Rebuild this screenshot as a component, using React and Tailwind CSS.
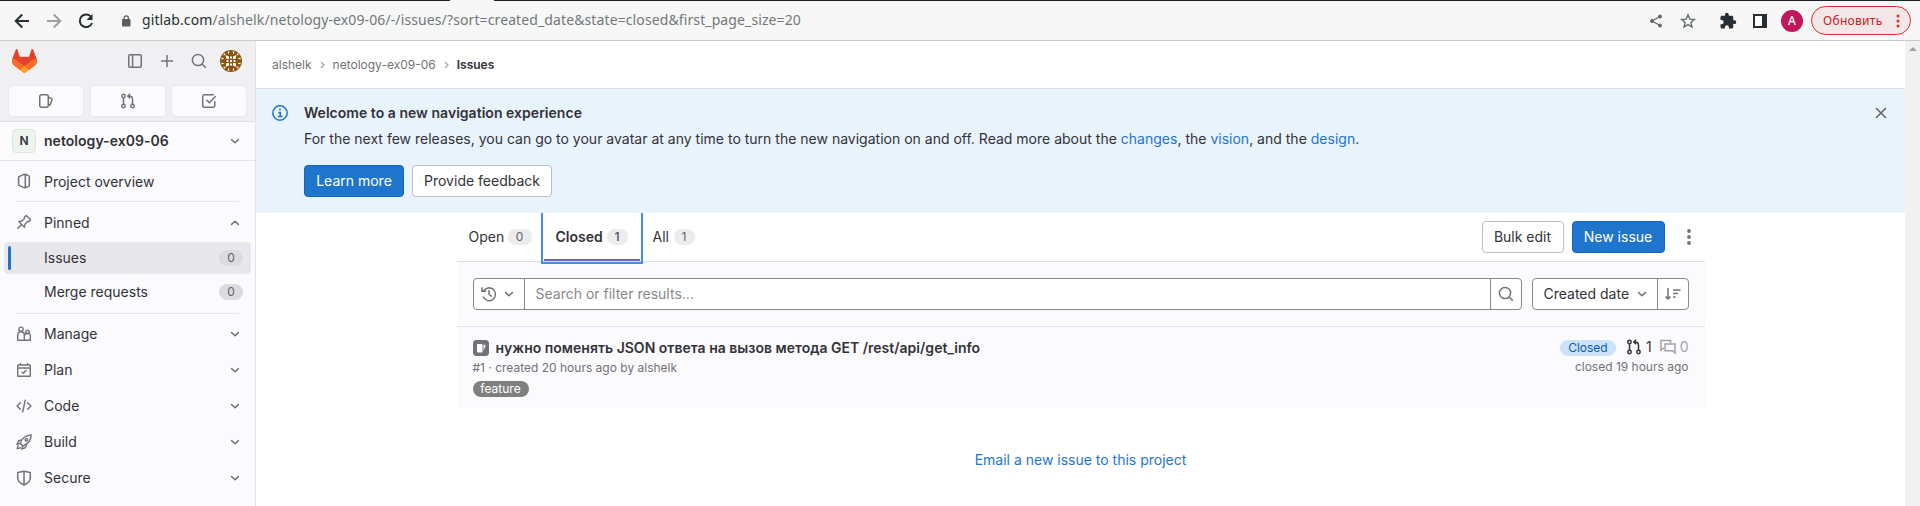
import React from "react";

const S = ({ s = 16, children, className = "", w = 1.5 }) => (
  <svg width={s} height={s} viewBox="0 0 16 16" fill="none" stroke="currentColor" strokeWidth={w} className={"shrink-0 " + className}>
    {children}
  </svg>
);

const ChevronDown = ({ className }) => <S className={className}><path d="M4.6 6.6 8 9.8l3.4-3.2" strokeLinecap="round" strokeLinejoin="round" /></S>;
const ChevronUp = ({ className }) => <S className={className}><path d="M4.6 9.4 8 6.2l3.4 3.2" strokeLinecap="round" strokeLinejoin="round" /></S>;
const SearchIcon = () => <S><circle cx="7" cy="7" r="5.6" /><path d="m11 11 3.8 3.8" /></S>;
const MergeIcon = () => (
  <S>
    <circle cx="3.5" cy="3" r="1.7" /><circle cx="3.5" cy="13" r="1.7" /><circle cx="12.5" cy="13" r="1.7" />
    <path d="M3.5 4.7v6.6M12.5 11.3V6a3 3 0 0 0-3-3H8M10 .8 7.8 3 10 5.2" />
  </S>
);
const IssuesIcon = () => (
  <S><rect x="1.75" y="1.75" width="8.5" height="12.5" rx="1.5" /><path d="M10.3 4.3 13.6 5.6a.8.8 0 0 1 .5 1l-2.3 5.6-1.5-.7" strokeLinejoin="round" /></S>
);
const TodoIcon = () => <S><path d="M13.8 8.8v3.4a2 2 0 0 1-2 2H3.7a2 2 0 0 1-2-2V3.7a2 2 0 0 1 2-2h8.6M5.8 7.2l2.6 2.6 6-6.2" strokeLinecap="round" strokeLinejoin="round" /></S>;
const PanelIcon = () => <S><rect x="1.75" y="1.75" width="12.5" height="12.5" rx="1.2" /><path d="M5.6 2v12" /></S>;
const PlusIcon = () => <S><path d="M8 2v12M2 8h12" /></S>;
const OverviewIcon = () => <S className="mb-0.5"><path d="M6.9 1.9 3 3.6a.8.8 0 0 0-.4.7v7.4c0 .3.1.6.4.7l3.9 1.7M9.3 1.3v13.4M6.9 1.8l2.4-.6 3.2 1.4c.5.2.8.6.8 1v8.8c0 .4-.3.8-.8 1l-3.2 1.4-2.4-.6" strokeLinejoin="round" /></S>;
const PinIcon = () => <S w={1.4} className="mb-0.5"><path d="m1.3 14.7 4.2-4.2M2.8 7.6l5.6 5.6.6-3 2.500-2.800 1.100.4 2-2-4.400-4.400-2 2 .4 1.100-2.800 2.500z" strokeLinejoin="round" /></S>;
const ManageIcon = () => (
  <S w={1.4}><circle cx="5" cy="3.2" r="2.1" /><path d="M1.7 14.3V9a3.3 3.3 0 0 1 6.6 0v5.3zM8.3 14.3h6V10.5a2.8 2.8 0 0 0-5.6-1" strokeLinejoin="round" /><circle cx="11.5" cy="5.9" r="1.8" /></S>
);
const PlanIcon = () => <S w={1.4}><rect x="1.7" y="3" width="12.6" height="11.3" rx=".5" /><path d="M1.7 6h12.6M4.5 1v2M11.5 1v2M5.8 9.8l1.6 1.5 3-3" /></S>;
const CodeIcon = () => <S><path d="M4.3 4.8 1.1 8l3.2 3.2M11.7 4.8 14.9 8l-3.2 3.2M9.2 2.3 6.8 13.7" strokeLinecap="round" strokeLinejoin="round" /></S>;
const BuildIcon = () => (
  <S w={1.4}><path d="M4.2 9.2C5.8 4.6 9.6 1.2 15.2.9c-.2 5.4-3.6 9.4-8.1 11z" strokeLinejoin="round" /><circle cx="10.3" cy="5.8" r="1.2" /><path d="M5.5 5.8 2.8 6.6.9 10.3l3.4-.9M10.3 10.6l-.8 2.9-3.8 1.6 1-3.6M2.2 11.2l-1 3.4 3.6-.8" strokeLinejoin="round" /></S>
);
const SecureIcon = () => <S><path d="M8 1.2 1.7 2.6v5.2c0 3.3 2.3 5.6 6.3 7.2 4-1.6 6.3-3.9 6.3-7.2V2.6zM8 1.3V15" strokeLinejoin="round" /></S>;

const Logo = () => (
  <svg width="25" height="24" viewBox="0 0 25 24" className="shrink-0">
    <path fill="#E24329" d="m24.5 9.5-.03-.09L21.08.56a.9.9 0 0 0-1.69.09l-2.29 7.01H7.83L5.54.65A.9.9 0 0 0 3.85.56L.46 9.41l-.03.09a6.3 6.3 0 0 0 2.09 7.28l.01.01.03.02 5.16 3.87 2.56 1.93 1.55 1.18a1.05 1.05 0 0 0 1.27 0l1.55-1.18 2.56-1.93 5.2-3.89.01-.01A6.3 6.3 0 0 0 24.5 9.5z" />
    <path fill="#FC6D26" d="m24.5 9.5-.03-.09a11.4 11.4 0 0 0-4.56 2.05l-7.45 5.63 4.74 3.58 5.2-3.89.02-.01A6.3 6.3 0 0 0 24.5 9.5z" />
    <path fill="#FCA326" d="m7.7 20.68 2.58 1.94 1.55 1.18a1.05 1.05 0 0 0 1.27 0l1.55-1.18 2.56-1.94-4.75-3.59z" />
    <path fill="#FC6D26" d="M5.01 11.46A11.4 11.4 0 0 0 .46 9.41l-.03.09a6.3 6.3 0 0 0 2.09 7.28l.04.03 5.16 3.87 4.75-3.59z" />
  </svg>
);

const Avatar = () => (
  <svg width="22" height="22" viewBox="0 0 22 22" className="ml-[13px] shrink-0">
    <circle cx="11" cy="11" r="11" fill="#8a5310" />
    <g fill="#fff">
      <path d="M10 6.500h2v2h-2zM10 10h2v2h-2zM10 13.500h2v2h-2zM6.500 10h2v2h-2zM13.500 10h2v2h-2z" />
      <path d="M5.500 5l3.500 1.500v2.500H6.500zM16.500 5 13 6.500v2.500h2.500zM5.500 17 9 15.500V13H6.500zM16.500 17 13 15.500V13h2.500z" />
      <path d="M7.500 1.500h2l-1 3zM14.500 1.500h-2l1 3zM7.500 20.500h2l-1-3zM14.500 20.500h-2l1-3zM1.500 7.500v2l3-1zM1.500 14.500v-2l3 1zM20.500 7.500v2l-3-1zM20.500 14.500v-2l-3 1z" />
      <path d="M2.800 5.200 5 3l.3 2zM19.200 5.200 17 3l-.3 2zM2.800 16.800 5 19l.3-2zM19.200 16.800 17 19l-.3-2z" />
    </g>
  </svg>
);

const Toolbar = () => (
  <header className="flex h-[41px] shrink-0 flex-col border-b border-[#cbcbcc] bg-[#f7f7f7] font-['Noto_Sans',sans-serif]">
    <div className="flex h-px shrink-0 justify-between">
      <div className="w-[450px] bg-[#1d2226]" />
      <div className="w-[1426px] bg-[#1d2226]" />
    </div>
    <div className="flex h-[39px] items-center text-[#263033]">
      <svg width="16" height="16" viewBox="0 0 16 16" className="ml-[14px]" fill="none" stroke="#263033" strokeWidth="2"><path d="M15 8H2M8.200 1.500 1.700 8l6.500 6.500" /></svg>
      <svg width="16" height="16" viewBox="0 0 16 16" className="ml-4" fill="none" stroke="#9c9fa0" strokeWidth="2"><path d="M1 8h13M7.800 1.500 14.300 8l-6.500 6.500" /></svg>
      <svg width="16" height="16" viewBox="0 0 16 16" className="ml-4" fill="none" stroke="#263033" strokeWidth="2"><path d="M13.200 4A6.300 6.300 0 1 0 14 10" /><path d="M14.500 1v6h-6z" fill="#263033" stroke="none" /></svg>
      <svg width="10" height="12" viewBox="0 0 10 12" className="ml-[27px]"><rect x="1" y="4" width="8.500" height="7.500" rx="1" fill="#5a5f63" /><path d="M3 5V3a2.200 2.200 0 0 1 4.400 0v2" fill="none" stroke="#5a5f63" strokeWidth="1.300" /></svg>
      <span className="ml-[11px] pb-[2px] text-[14px] tracking-[0.11px] whitespace-nowrap text-[#72777a]"><span className="text-[#263033]">gitlab.com</span>/alshelk/netology-ex09-06/-/issues/?sort=created_date&amp;state=closed&amp;first_page_size=20</span>
      <div className="ml-auto flex items-center">
        <svg width="14" height="14" viewBox="0 0 14 14" className="mr-[17px]" fill="#5f6568" stroke="#5f6568"><circle cx="11" cy="2.500" r="1.500" /><circle cx="3" cy="7" r="1.500" /><circle cx="11" cy="11.500" r="1.500" /><path d="M11 2.500 3 7l8 4.500" fill="none" strokeWidth="1.200" /></svg>
        <svg width="16" height="16" viewBox="0 0 16 16" className="mr-[23px]" fill="none" stroke="#5f6568" strokeWidth="1.300"><path d="m8 1.800 1.800 4.300 4.600.4-3.500 3 1.100 4.500L8 11.600 4 14l1.100-4.500-3.500-3 4.600-.4z" /></svg>
        <svg width="18" height="18" viewBox="0 0 24 24" className="mr-[16px]" fill="#263033"><path d="M20.500 11H19V7c0-1.100-.9-2-2-2h-4V3.500a2.500 2.500 0 0 0-5 0V5H4c-1.100 0-2 .9-2 2v3.800h1.500a2.700 2.700 0 0 1 0 5.400H2V20c0 1.100.9 2 2 2h3.800v-1.500a2.700 2.700 0 0 1 5.400 0V22H17c1.100 0 2-.9 2-2v-4h1.500a2.500 2.500 0 0 0 0-5z" /></svg>
        <svg width="14" height="14" viewBox="0 0 14 14" className="mr-[14px]"><rect x="1" y="1" width="12" height="12" fill="#fff" stroke="#263033" strokeWidth="2" /><rect x="9" width="5" height="14" fill="#263033" /></svg>
        <span className="mr-2 flex size-[22px] items-center justify-center rounded-full bg-[#c2185b] text-[12px] font-medium text-white">A</span>
        <span className="mr-[9px] flex h-[29px] w-[100px] items-center rounded-full border border-[#cf2f27] bg-[#f3e6e6] pl-[11px] text-[12px] text-[#c5221f]">
          <span className="tracking-[0.3px]">Обновить</span>
          <svg width="4" height="14" viewBox="0 0 4 14" className="mr-[10px] ml-auto" fill="#d93025"><circle cx="2" cy="2" r="1.500" /><circle cx="2" cy="7" r="1.500" /><circle cx="2" cy="12" r="1.500" /></svg>
        </span>
      </div>
    </div>
  </header>
);

const NavBtn = ({ children }) => <div className="flex h-8 w-[76px] items-center justify-center rounded-sm border border-[#e7e7ec] bg-[#fbfafd] text-[#737278]">{children}</div>;

const NavItem = ({ icon, label, chevron }) => (
  <div className="flex h-9 items-center pr-[12px] pl-4">
    <span className="text-[#737278]">{icon}</span>
    <span className="ml-3 pb-px">{label}</span>
    <span className="ml-auto text-[#737278]">{chevron === "up" ? <ChevronUp /> : chevron === "down" ? <ChevronDown /> : null}</span>
  </div>
);

const Count = ({ children, className }) => <span className={"flex h-4 items-center justify-center rounded-full text-[12px] leading-4 " + className}>{children}</span>;

const Sidebar = () => (
  <aside className="flex w-64 shrink-0 flex-col border-r border-[#e4e4e8] bg-[#fbfafd] text-[#333238]">
    <div className="h-[81px] shrink-0 border-b border-[#e4e4e8] bg-[#f0f0f3]">
      <div className="flex h-10 items-center pl-3 text-[#737278]">
        <Logo />
        <span className="ml-[90px]"><PanelIcon /></span>
        <span className="ml-4"><PlusIcon /></span>
        <span className="ml-4"><SearchIcon /></span>
        <Avatar />
      </div>
      <div className="mt-1 flex justify-between pr-2 pl-2">
        <NavBtn><IssuesIcon /></NavBtn>
        <NavBtn><MergeIcon /></NavBtn>
        <NavBtn><TodoIcon /></NavBtn>
      </div>
    </div>
    <div className="flex h-[39px] shrink-0 items-center border-b border-[#e4e4e8] pr-3 pl-3">
      <span className="flex size-6 items-center justify-center rounded-sm border border-[#dfe6e1] bg-[#ecf4ee] text-[12px] font-semibold">N</span>
      <span className="ml-2 font-semibold tracking-[0.04px]">netology-ex09-06</span>
      <ChevronDown className="ml-auto text-[#737278]" />
    </div>
    <div className="pt-[3px]"><NavItem icon={<OverviewIcon />} label="Project overview" /></div>
    <div className="mx-4 mt-px h-px bg-[#e7e7eb]" />
    <div className="pt-[3px]"><NavItem icon={<PinIcon />} label="Pinned" chevron="up" /></div>
    <div className="mx-1 mt-px flex h-8 items-center rounded-sm bg-[#e8e7ec] pr-2 pl-1">
      <span className="h-6 w-[3px] rounded-full bg-[#1f75cb]" />
      <span className="ml-[33px]">Issues</span>
      <Count className="ml-auto w-6 bg-[#dcdcde] text-[#626168]">0</Count>
    </div>
    <div className="mx-1 mt-[2px] flex h-8 items-center pr-2 pl-10">
      <span>Merge requests</span>
      <Count className="ml-auto w-6 bg-[#dcdcde] text-[#626168]">0</Count>
    </div>
    <div className="mx-4 mt-[5px] mb-[2px] h-px bg-[#e7e7eb]" />
    <NavItem icon={<ManageIcon />} label="Manage" chevron="down" />
    <NavItem icon={<PlanIcon />} label="Plan" chevron="down" />
    <NavItem icon={<CodeIcon />} label="Code" chevron="down" />
    <NavItem icon={<BuildIcon />} label="Build" chevron="down" />
    <NavItem icon={<SecureIcon />} label="Secure" chevron="down" />
  </aside>
);

const Crumb = () => <svg width="5" height="8" viewBox="0 0 5 8" fill="none" stroke="#a4a3a8" strokeWidth="1.200"><path d="m1 1 3 3-3 3" /></svg>;

const Banner = () => (
  <section className="flex h-[124px] bg-[#e9f3fc] pr-4 pl-4">
    <svg width="16" height="16" viewBox="0 0 16 16" className="mt-4" fill="none" stroke="#1f75cb" strokeWidth="1.500"><circle cx="8" cy="8" r="7.200" /><path d="M6.300 7.500h2v4M5.800 11.500h4.600" /><circle cx="8" cy="4.600" r="1" fill="#1f75cb" stroke="none" /></svg>
    <div className="ml-4">
      <h2 className="mt-[13px] text-[14px] leading-[21px] font-semibold tracking-[0.03px]">Welcome to a new navigation experience</h2>
      <p className="mt-[5px] leading-[21px] tracking-[0.005px] whitespace-nowrap">
        For the next few releases, you can go to your avatar at any time to turn the new navigation on and off. Read more about the <a className="text-[#1f75cb]">changes</a>, the <a className="text-[#1f75cb]">vision</a>, and the <a className="text-[#1f75cb]">design</a>.
      </p>
      <div className="mt-4 flex gap-2">
        <button className="h-8 w-[100px] rounded-sm border border-[#1068bf] bg-[#1f75cb] pb-px text-white">Learn more</button>
        <button className="h-8 w-[140px] rounded-sm border border-[#bfbfc3] bg-white pb-px">Provide feedback</button>
      </div>
    </div>
    <S className="mt-4 ml-auto text-[#626168]"><path d="m3 3 10 10M13 3 3 13" /></S>
  </section>
);

const Tabs = () => (
  <div className="relative z-10 flex h-[49px] border-b border-[#dcdcde]">
    <div className="flex w-[84px] items-center pl-3"><span className="pb-px">Open</span><Count className="mr-[9px] ml-auto w-6 bg-[#ececef] text-[#626168]">0</Count></div>
    <div className="h-[51px] w-[102px] border-2 border-t-0 border-[#428fdc] px-px pb-px">
      <div className="flex h-full items-center border-b-2 border-[#6666c4] pt-[2px] pl-[12px] font-semibold">
        <span className="pb-px">Closed</span><Count className="mr-3 ml-auto w-[21px] bg-[#ececef] font-semibold text-[#626168]">1</Count>
      </div>
    </div>
    <div className="flex w-[52px] items-center pl-[10px]"><span className="pb-px">All</span><Count className="ml-auto w-[21px] bg-[#ececef] text-[#626168]">1</Count></div>
    <div className="ml-auto flex items-center gap-2">
      <button className="h-8 w-[82px] rounded-sm border border-[#bfbfc3] bg-white pb-px">Bulk edit</button>
      <button className="h-8 w-[93px] rounded-sm border border-[#1068bf] bg-[#1f75cb] pb-px text-white">New issue</button>
      <span className="flex w-8 justify-center text-[#737278]"><S><g fill="currentColor" stroke="none"><circle cx="8" cy="2" r="1.900" /><circle cx="8" cy="8" r="1.900" /><circle cx="8" cy="14" r="1.900" /></g></S></span>
    </div>
  </div>
);

const Filter = () => (
  <div className="flex h-[65px] items-center border-b border-[#e4e4e8] pr-4 pl-4 text-[#737278]">
    <div className="flex h-8 w-[1049px] rounded-sm border border-[#89888d] bg-white">
      <div className="flex w-[51px] items-center gap-1 border-r border-[#89888d] pl-[7px]">
        <S><path d="M2.400 5.200A6.400 6.400 0 1 1 2 10.500M1 1.200v4h4.200M8 4v4.200l2.800 2.400" /></S><ChevronDown />
      </div>
      <span className="flex flex-1 items-center pl-[11px] text-[#89888d]">Search or filter results…</span>
      <div className="flex w-[31px] items-center justify-center border-l border-[#89888d]"><SearchIcon /></div>
    </div>
    <div className="ml-auto flex h-8 w-[157px] rounded-sm border border-[#89888d] bg-white">
      <div className="flex flex-1 items-center pl-[11px] text-[#333238]"><span className="pb-px">Created date</span><ChevronDown className="ml-[5px] text-[#737278]" /></div>
      <div className="flex w-[31px] items-center justify-center border-l border-[#89888d]"><S><path d="M3 2v11M.5 10.500 3 13l2.500-2.500M8 4h7.500M8 7.500h5M8 11h2.500" /></S></div>
    </div>
  </div>
);

const Issue = () => (
  <div className="flex h-[81px] pt-[11px] pr-4 pl-4 text-[12px] text-[#737278]">
    <div>
      <div className="flex h-5 items-center text-[14px] font-semibold text-[#333238]">
        <svg width="16" height="16" viewBox="0 0 16 16"><rect width="16" height="16" rx="3.500" fill="#737278" /><rect x="4" y="4" width="5.500" height="8.500" rx="1" fill="#fff" /><path d="M10.500 4.500 12.700 5.200 10.500 11z" fill="#fff" /></svg>
        <span className="ml-[7px] pb-px tracking-[0.01px] whitespace-nowrap">нужно поменять JSON ответа на вызов метода GET /rest/api/get_info</span>
      </div>
      <div className="mt-[2px] h-4 leading-4">#1 · created 20 hours ago by alshelk</div>
      <span className="mt-[5px] flex h-4 w-14 items-center justify-center rounded-full bg-[#7f7f7f] pb-px text-white">feature</span>
    </div>
    <div className="ml-auto flex flex-col items-end">
      <div className="flex h-5 items-center">
        <span className="mr-[10px] flex h-4 w-14 items-center justify-center rounded-full bg-[#cbe2f9] text-[#0b5cad]">Closed</span>
        <div className="flex items-center pb-[2px]">
          <span className="text-[#333238]"><MergeIcon /></span>
          <span className="ml-1 text-[14px] text-[#333238]">1</span>
          <span className="ml-2 text-[#a4a3a8]"><S><path d="M4 9.500H1.800L1 12V1.500h9.500V4M5 5h10v9l-2.500-2.300H5z" /></S></span>
          <span className="ml-1 text-[14px] text-[#a4a3a8]">0</span>
        </div>
      </div>
      <div className="mt-px h-4 leading-4">closed 19 hours ago</div>
    </div>
  </div>
);

export default function App() {
  return (
    <div className="flex h-[506px] w-[1920px] flex-col overflow-hidden bg-white font-['Inter',sans-serif] text-[14px] leading-5 text-[#333238]">
      <Toolbar />
      <div className="flex min-h-0 flex-1">
        <Sidebar />
        <main className="w-[1649px]">
          <nav className="flex h-12 items-center border-b border-[#dcdcde] pl-4 text-[12px] text-[#737278]">
            <span>alshelk</span><span className="mx-[8px]"><Crumb /></span><span>netology-ex09-06</span><span className="mx-[8px]"><Crumb /></span><span className="font-semibold text-[#333238]">Issues</span>
          </nav>
          <Banner />
          <div className="mx-auto w-[1248px]">
            <Tabs />
            <div className="bg-[#fbfafd]"><Filter /><Issue /></div>
            <p className="mt-[41px] text-center leading-[21px] text-[#1f75cb]">Email a new issue to this project</p>
          </div>
        </main>
        <div className="flex w-[15px] justify-center bg-[#f1f1f1] pt-[6px]">
          <svg width="8" height="4" viewBox="0 0 8 4"><path d="M0 4 4 0l4 4z" fill="#a3a3a3" /></svg>
        </div>
      </div>
    </div>
  );
}
